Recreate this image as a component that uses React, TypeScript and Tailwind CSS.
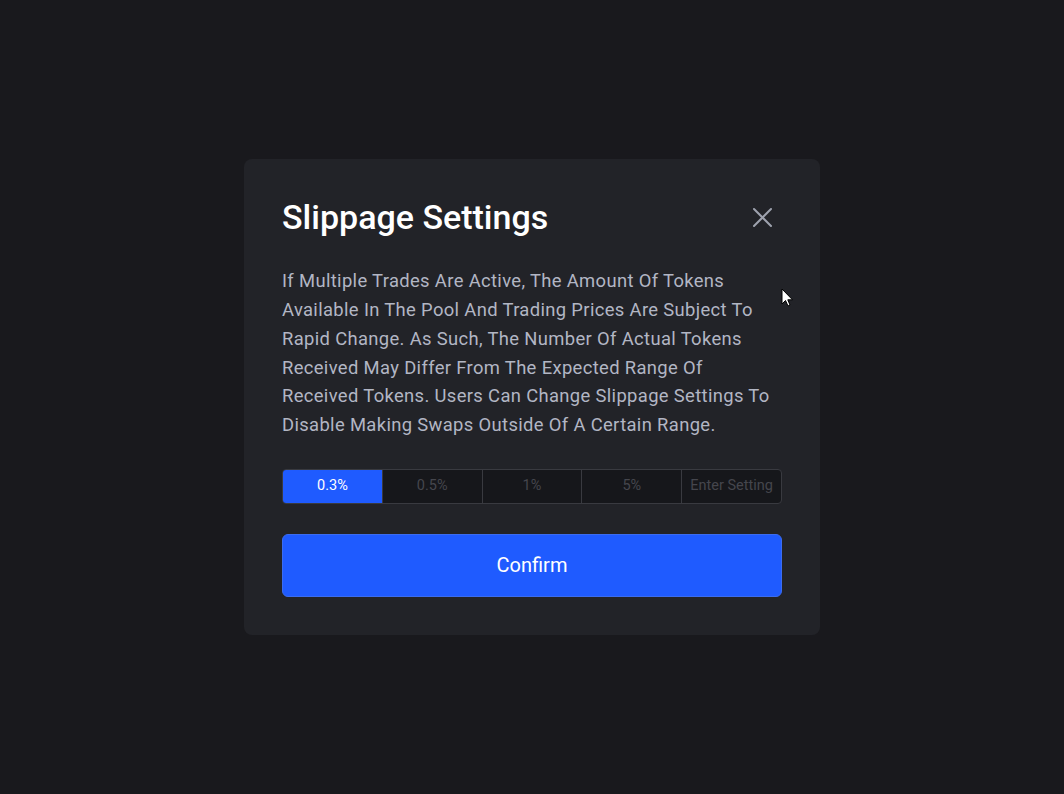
import { useState } from 'react';

const OPTIONS = ['0.3%', '0.5%', '1%', '5%'];

export default function App() {
  const [selected, setSelected] = useState('0.3%');
  const [custom, setCustom] = useState('');

  return (
    <div
      className="relative min-h-screen w-full bg-[#19191d] flex items-center justify-center"
      style={{ fontFamily: 'Roboto, "Liberation Sans", sans-serif' }}
    >
      <div className="w-[576px] bg-[#222328] rounded-lg px-[38px] pt-[38px] pb-[38px]">
        {/* Header */}
        <div className="flex items-center justify-between h-[40px]">
          <h2 className="text-[34px] leading-[40px] font-medium text-white">Slippage Settings</h2>
          <button className="text-[#9ea2ae] mr-[9px]">
            <svg width="21" height="21" viewBox="0 0 21 21" fill="none" stroke="currentColor" strokeWidth="2" strokeLinecap="round">
              <path d="M2 2 L19 19 M19 2 L2 19" />
            </svg>
          </button>
        </div>

        {/* Description */}
        <p className="mt-[30px] pr-[6px] text-[18.4px] leading-[28.7px] tracking-[0.35px] text-[#b2b6c4]">
          If Multiple Trades Are Active, The Amount Of Tokens Available In The Pool And Trading Prices Are Subject To
          Rapid Change. As Such, The Number Of Actual Tokens Received May Differ From The Expected Range Of Received
          Tokens. Users Can Change Slippage Settings To Disable Making Swaps Outside Of A Certain Range.
        </p>

        {/* Slippage options */}
        <div className="mt-[29px] flex h-[35px] rounded-[4px] border border-[#393a40] bg-[#16171b] overflow-hidden">
          {OPTIONS.map((o) => (
            <button
              key={o}
              onClick={() => setSelected(o)}
              className={`flex-1 text-[14.5px] border-r border-[#393a40] ${
                selected === o ? 'bg-[#1f5bff] text-white' : 'text-[#45464d]'
              }`}
            >
              {o}
            </button>
          ))}
          <input
            value={custom}
            onChange={(e) => setCustom(e.target.value)}
            placeholder="Enter Setting"
            className="flex-1 min-w-0 bg-transparent text-center text-[14.5px] text-[#b2b6c4] placeholder-[#45464d] outline-none"
          />
        </div>

        {/* Confirm */}
        <button className="mt-[30px] w-full h-[63px] rounded-[6px] bg-[#1f5bff] border border-[#3b6cf0] text-white text-[20px]">
          Confirm
        </button>
      </div>

      {/* mouse pointer */}
      <svg className="absolute left-[781px] top-[288px]" width="13" height="20" viewBox="0 0 13 20">
        <path d="M1 1 L1 16 L4.5 12.5 L7 18 L9 17 L6.8 11.8 L11.5 11.8 Z" fill="#fff" stroke="#000" strokeWidth="1" />
      </svg>
    </div>
  );
}
